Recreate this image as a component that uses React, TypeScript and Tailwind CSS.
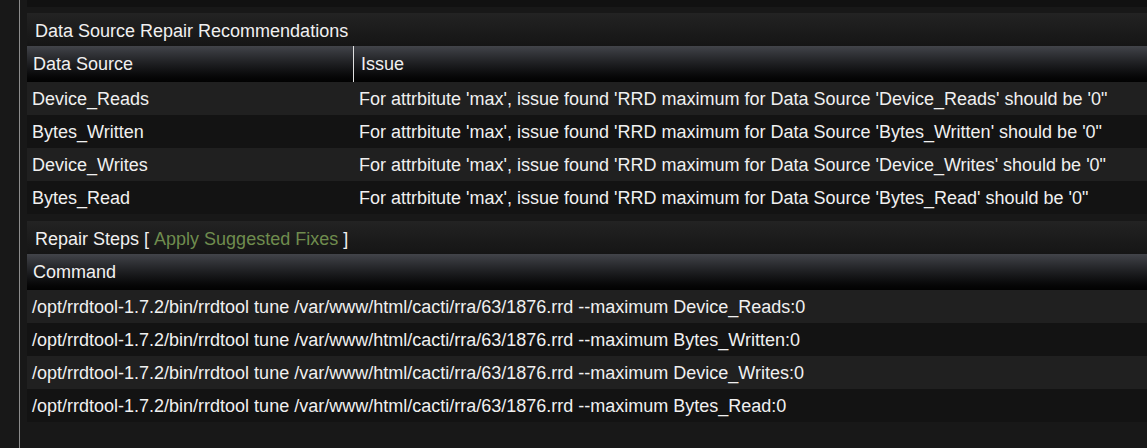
import React from "react";

const issues = [
  ["Device_Reads", "For attrbitute 'max', issue found 'RRD maximum for Data Source 'Device_Reads' should be '0\""],
  ["Bytes_Written", "For attrbitute 'max', issue found 'RRD maximum for Data Source 'Bytes_Written' should be '0\""],
  ["Device_Writes", "For attrbitute 'max', issue found 'RRD maximum for Data Source 'Device_Writes' should be '0\""],
  ["Bytes_Read", "For attrbitute 'max', issue found 'RRD maximum for Data Source 'Bytes_Read' should be '0\""],
];

const cmds = ["Device_Reads", "Bytes_Written", "Device_Writes", "Bytes_Read"].map(
  (d) => `/opt/rrdtool-1.7.2/bin/rrdtool tune /var/www/html/cacti/rra/63/1876.rrd --maximum ${d}:0`
);

export default function App() {
  return (
    <div
      className="flex h-[448px] w-[1147px] overflow-hidden bg-[#181818] text-[18px] leading-[20px] text-[#f0f0f0]"
      style={{ fontFamily: '"Liberation Sans", Arial, sans-serif' }}
    >
      <div className="w-[19px] shrink-0" />
      <div className="w-px shrink-0 bg-[#8c8c8c]" />
      <div className="w-[7px] shrink-0" />
      <div className="flex w-[1140px] shrink-0 flex-col">
        <div className="h-[7px] bg-[#111111]" />
        <div className="mt-[6px] flex h-[33px] items-center bg-gradient-to-b from-[#232323] to-[#151515] pt-[2px] pl-[8px]">
          Data Source Repair Recommendations
        </div>
        <div className="flex h-[36px] bg-gradient-to-b from-[#42444a] to-[#020202]">
          <div className="flex w-[326px] items-center pl-[6px]">Data Source</div>
          <div className="w-px bg-[#e0e0e0]" />
          <div className="flex items-center pl-[7px]">Issue</div>
        </div>
        {issues.map(([ds, issue], i) => (
          <div
            key={ds}
            className={`flex h-[33px] items-center pt-[1px] ${i % 2 === 0 ? "bg-[#202020]" : "bg-[#131313]"}`}
          >
            <div className="w-[327px] pl-[5px]">{ds}</div>
            <div className="pl-[5px]">{issue}</div>
          </div>
        ))}
        <div className="mt-[7px] flex h-[33px] items-center bg-gradient-to-b from-[#232323] to-[#151515] pt-[2px] pl-[8px]">
          <span>Repair Steps [&nbsp;</span>
          <span className="text-[#6f8c4e]">Apply Suggested Fixes</span>
          <span>&nbsp;]</span>
        </div>
        <div className="flex h-[36px] items-center bg-gradient-to-b from-[#42444a] to-[#020202] pl-[6px]">
          Command
        </div>
        {cmds.map((c, i) => (
          <div
            key={c}
            className={`flex h-[33px] items-center pt-[1px] pl-[5px] ${i % 2 === 0 ? "bg-[#202020]" : "bg-[#131313]"}`}
          >
            {c}
          </div>
        ))}
      </div>
    </div>
  );
}
